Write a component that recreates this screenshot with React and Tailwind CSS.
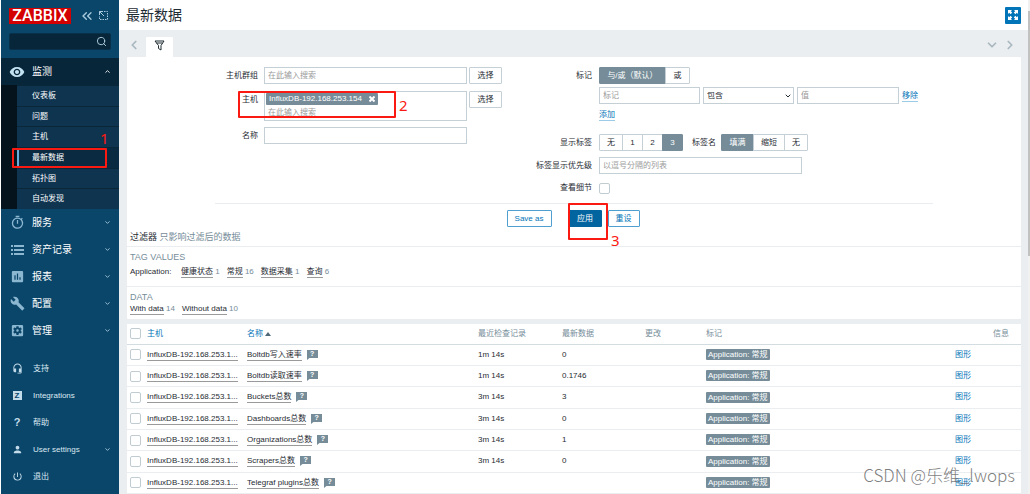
import { useState } from "react";
import {
  ChevronDown,
  ChevronLeft,
  ChevronRight,
  ChevronUp,
  ChevronsLeft,
  Search,
} from "lucide-react";
import {
  MdAssessment,
  MdBuild,
  MdHeadsetMic,
  MdOutlineTimer,
  MdPerson,
  MdPowerSettingsNew,
  MdSettingsApplications,
  MdVisibility,
} from "react-icons/md";

const subMenu = ["仪表板", "问题", "主机", "最新数据", "拓扑图", "自动发现"];

const ListIcon = () => (
  <svg width="13" height="10" viewBox="0 0 13 10" fill="currentColor">
    <path d="M0 0h2v2H0zM3 0h10v2H3zM0 4h2v2H0zM3 4h10v2H3zM0 8h2v2H0zM3 8h10v2H3z" />
  </svg>
);

const mainMenu = [
  { label: "服务", Icon: MdOutlineTimer },
  { label: "资产记录", Icon: ListIcon },
  { label: "报表", Icon: MdAssessment },
  { label: "配置", Icon: MdBuild },
  { label: "管理", Icon: MdSettingsApplications },
];

const ZIcon = () => (
  <span className="flex h-[9px] w-[9px] items-center justify-center bg-[#c3dcea] text-[8px] font-bold leading-none text-[#0a466a]">
    Z
  </span>
);

const HelpIcon = () => (
  <span className="text-[11px] font-bold leading-none">?</span>
);

const userMenu = [
  { label: "支持", Icon: MdHeadsetMic },
  { label: "Integrations", Icon: ZIcon },
  { label: "帮助", Icon: HelpIcon },
  { label: "User settings", Icon: MdPerson, more: true },
  { label: "退出", Icon: MdPowerSettingsNew },
];

const rows = [
  { name: "Boltdb写入速率", check: "1m 14s", value: "0" },
  { name: "Boltdb读取速率", check: "1m 14s", value: "0.1746" },
  { name: "Buckets总数", check: "3m 14s", value: "3" },
  { name: "Dashboards总数", check: "3m 14s", value: "0" },
  { name: "Organizations总数", check: "3m 14s", value: "1" },
  { name: "Scrapers总数", check: "3m 14s", value: "0" },
  { name: "Telegraf plugins总数", check: "", value: "" },
];

const tagValues = [
  { label: "健康状态", count: 1 },
  { label: "常规", count: 16 },
  { label: "数据采集", count: 1 },
  { label: "查询", count: 6 },
];

const inputClass =
  "h-[17px] border border-[#c5d0d6] bg-white px-[3px] text-[8px] leading-none text-[#1f2c33] outline-none placeholder:text-[#9a9a9a]";
const grayButton =
  "h-[17px] w-[33px] shrink-0 rounded-[1px] border border-[#c5d0d6] bg-white leading-none";
const blueLink =
  "inline-block border-b border-[#9ccbe8] leading-[11px] text-[#0275b8]";
const darkLink = "inline-block border-b border-[#9a9a9a] leading-[10px]";
const checkboxClass =
  "block h-[11px] w-[11px] appearance-none rounded-[2px] border border-[#c0ccd2] bg-white checked:bg-[#0275b8]";

function Segments({ name, options, value }) {
  const [selected, setSelected] = useState(value);

  return (
    <div className="flex">
      {options.map((item, i) => (
        <label
          key={i}
          className={`-mr-px flex h-[17px] items-center justify-center border border-[#c5d0d6] first:rounded-l-[1px] last:rounded-r-[1px] has-checked:border-[#768d99] has-checked:bg-[#768d99] has-checked:text-white ${item.width}`}
        >
          <input
            type="radio"
            name={name}
            className="sr-only"
            checked={selected === i}
            onChange={() => setSelected(i)}
          />
          {item.label}
        </label>
      ))}
    </div>
  );
}

function Sidebar() {
  return (
    <aside className="w-[118px] shrink-0 bg-[#0a466a] text-white">
      <div className="flex h-[31px] items-center pl-2">
        <a
          href="#"
          className="flex h-4 w-[62px] items-center justify-center bg-[#d40000] font-['Roboto',sans-serif] text-[16px] font-medium leading-none"
        >
          ZABBIX
        </a>
        <button className="ml-2 text-[#a9cbe0]" aria-label="折叠">
          <ChevronsLeft size={16} strokeWidth={2} />
        </button>
        <button className="ml-1 text-[#a9cbe0]" aria-label="隐藏">
          <svg width="9" height="9" viewBox="0 0 9 9" fill="none" stroke="currentColor">
            <path d="M5 .5h3.500v8H.5V5" strokeDasharray="1.500 1" />
            <path d="M.5 4V.5H4M.5 .5L5 5" />
          </svg>
        </button>
      </div>

      <div className="mx-2 mt-[2px] flex h-[17px] items-center rounded-[2px] border border-[#08304a] bg-[#072639] pr-[3px]">
        <input
          className="h-full w-full min-w-0 bg-transparent px-1 text-[8px] outline-none"
          aria-label="搜索"
        />
        <Search size={11} className="shrink-0 text-[#b5d3e4]" />
      </div>

      <nav className="mt-2 text-[10px]">
        <a href="#" className="flex h-[27px] items-center bg-[#08263a] px-2">
          <MdVisibility size={16} className="text-[#c3e2f2]" />
          <span className="ml-[7px] flex-1">监测</span>
          <ChevronUp size={7} strokeWidth={3} />
        </a>
        <div className="relative bg-[#05131d] pl-4 text-[8px]">
          <ul className="flex h-[124px] flex-col bg-[#0e3450]">
            {subMenu.map((item, i) => (
              <li
                key={i}
                className={`flex flex-1 border-t border-[#0a2639] ${
                  item === "最新数据" ? "bg-[#0a2a41]" : ""
                }`}
              >
                <a
                  href="#"
                  className={`flex flex-1 items-center border-l-2 pl-[13px] ${
                    item === "最新数据"
                      ? "border-[#69aedb]"
                      : "border-transparent"
                  }`}
                >
                  {item}
                </a>
              </li>
            ))}
          </ul>
          <div className="pointer-events-none absolute left-[11px] top-[63px] h-[20px] w-[95px] rounded-[1px] border-2 border-[#fb1a12]" />
          <span className="absolute left-[99px] top-[45px] font-['Noto_Sans',sans-serif] text-[15px] leading-4 text-[#fb1a12]">
            1
          </span>
        </div>
        {mainMenu.map(({ label, Icon }, i) => (
          <a key={i} href="#" className="flex h-[27px] items-center px-2">
            <span className="flex w-4 justify-center text-[#8cb7d1]">
              <Icon size={15} />
            </span>
            <span className="ml-[7px] flex-1">{label}</span>
            <ChevronDown size={7} strokeWidth={3} className="text-[#a9cbe0]" />
          </a>
        ))}
      </nav>

      <nav className="mt-[11px] text-[8px] text-[#dbe9f2]">
        {userMenu.map(({ label, Icon, more }, i) => (
          <a key={i} href="#" className="flex h-[27px] items-center px-2">
            <span className="flex w-4 justify-center text-[#c3dcea]">
              <Icon size={11} />
            </span>
            <span className="ml-2 flex-1">{label}</span>
            {more && (
              <ChevronDown size={7} strokeWidth={3} className="text-[#a9cbe0]" />
            )}
          </a>
        ))}
      </nav>
    </aside>
  );
}

function FilterLeft() {
  return (
    <div className="flex w-[287px] shrink-0 flex-col gap-[6px]">
      <div className="flex gap-[6px]">
        <label htmlFor="groups" className="w-[43px] text-right leading-[17px]">
          主机群组
        </label>
        <input
          id="groups"
          className={`${inputClass} w-[203px]`}
          placeholder="在此输入搜索"
        />
        <button className={`${grayButton} -ml-1`}>选择</button>
      </div>

      <div className="relative mt-px flex gap-[6px]">
        <label htmlFor="hosts" className="w-[43px] text-right leading-[17px]">
          主机
        </label>
        <div className="h-[30px] w-[203px] border border-[#c5d0d6] p-px">
          <span className="flex h-[12px] w-[112px] items-center justify-between rounded-[1px] bg-[#768d99] pl-[3px] pr-[3px] text-white">
            InfluxDB-192.168.253.154
            <button aria-label="移除主机">
              <svg width="6" height="6" viewBox="0 0 6 6" stroke="currentColor" strokeWidth="2">
                <path d="M.5 .5l5 5M5.500 .5l-5 5" />
              </svg>
            </button>
          </span>
          <input
            id="hosts"
            className="block h-[14px] w-full px-[2px] text-[8px] outline-none placeholder:text-[#9a9a9a]"
            placeholder="在此输入搜索"
          />
        </div>
        <button className={`${grayButton} -ml-1`}>选择</button>
        <div className="pointer-events-none absolute left-[23px] top-0 h-[27px] w-[158px] rounded-[1px] border-2 border-[#fb1a12]" />
        <span className="absolute left-[184px] top-[6px] font-['Noto_Sans',sans-serif] text-[15px] leading-4 text-[#fb1a12]">
          2
        </span>
      </div>

      <div className="flex gap-[6px]">
        <label htmlFor="name" className="w-[43px] text-right leading-[17px]">
          名称
        </label>
        <input id="name" className={`${inputClass} w-[203px]`} />
      </div>
    </div>
  );
}

function FilterRight() {
  return (
    <div className="flex-1">
      <div className="flex gap-[7px]">
        <span className="w-[90px] text-right leading-[17px]">标记</span>
        <div>
          <Segments
            name="evaltype"
            value={0}
            options={[
              { label: "与/或（默认）", width: "w-[67px]" },
              { label: "或", width: "w-[25px]" },
            ]}
          />
          <div className="mt-[3px] flex items-center gap-[3px]">
            <input
              className={`${inputClass} w-[101px]`}
              placeholder="标记"
              aria-label="标记"
            />
            <div className="relative">
              <select
                className={`${inputClass} w-[91px] appearance-none`}
                aria-label="运算符"
              >
                <option>包含</option>
                <option>等于</option>
              </select>
              <ChevronDown
                size={8}
                strokeWidth={3}
                className="pointer-events-none absolute right-[2px] top-[5px]"
              />
            </div>
            <input
              className={`${inputClass} w-[102px]`}
              placeholder="值"
              aria-label="值"
            />
            <button className={blueLink}>移除</button>
          </div>
          <div className="mt-[5px] flex h-3">
            <button className={blueLink}>添加</button>
          </div>
        </div>
      </div>

      <div className="mt-[13px] flex gap-[7px]">
        <span className="w-[90px] text-right leading-[17px]">显示标签</span>
        <Segments
          name="show_tags"
          value={3}
          options={[
            { label: "无", width: "w-[24px]" },
            { label: "1", width: "w-[21px]" },
            { label: "2", width: "w-[21px]" },
            { label: "3", width: "w-[21px]" },
          ]}
        />
        <div className="ml-[3px] flex gap-[5px]">
          <span className="leading-[17px]">标签名</span>
          <Segments
            name="tag_name_format"
            value={0}
            options={[
              { label: "填满", width: "w-[33px]" },
              { label: "缩短", width: "w-[32px]" },
              { label: "无", width: "w-[24px]" },
            ]}
          />
        </div>
      </div>

      <div className="mt-[6px] flex gap-[7px]">
        <label htmlFor="priority" className="w-[90px] text-right leading-[17px]">
          标签显示优先级
        </label>
        <input
          id="priority"
          className={`${inputClass} w-[203px]`}
          placeholder="以逗号分隔的列表"
        />
      </div>

      <div className="mt-2 flex h-3 items-center gap-[7px]">
        <label htmlFor="details" className="w-[90px] text-right">
          查看细节
        </label>
        <input id="details" type="checkbox" className={checkboxClass} />
      </div>
    </div>
  );
}

function Filter() {
  return (
    <section className="rounded-[1px] bg-white pt-[10px]">
      <form
        className="mx-auto max-w-[718px]"
        onSubmit={(e) => e.preventDefault()}
      >
        <div className="flex">
          <FilterLeft />
          <FilterRight />
        </div>
        <div className="relative mt-[9px] flex justify-center border-t border-[#ebeef0] pr-[2px] pt-[6px]">
          <button className="h-[17px] w-[45px] rounded-[1px] border border-[#4f9fd0] leading-none text-[#0275b8]">
            Save as
          </button>
          <button className="ml-[17px] h-[17px] w-[33px] rounded-[1px] bg-[#02659f] leading-none text-white">
            应用
          </button>
          <button className="ml-[6px] h-[17px] w-[32px] rounded-[1px] border border-[#4f9fd0] leading-none text-[#0275b8]">
            重设
          </button>
          <div className="pointer-events-none absolute left-[353px] -top-px h-[37px] w-[40px] rounded-[1px] border-2 border-[#fb1a12]" />
          <span className="absolute left-[396px] top-[28px] font-['Noto_Sans',sans-serif] text-[15px] leading-4 text-[#fb1a12]">
            3
          </span>
        </div>
      </form>

      <h4 className="mt-[2px] border-b border-[#ebeef0] px-[3px] pb-px text-[9px] leading-4">
        过滤器 <span className="text-[#768d99]">只影响过滤后的数据</span>
      </h4>

      <div className="h-10 border-b border-[#ebeef0] px-[3px] pt-1">
        <h3 className="text-[9px] leading-3 text-[#768d99]">TAG VALUES</h3>
        <div className="mt-1 flex text-[#768d99]">
          <span className="w-[51px] leading-[10px] text-[#1f2c33]">
            Application:
          </span>
          <div className="flex gap-[7px]">
            {tagValues.map((item, i) => (
              <span key={i} className="leading-[10px]">
                <a href="#" className={`${darkLink} text-[#1f2c33]`}>
                  {item.label}
                </a>{" "}
                {item.count}
              </span>
            ))}
          </div>
        </div>
      </div>

      <div className="px-[3px] pb-1 pt-1">
        <h3 className="text-[9px] leading-3 text-[#768d99]">DATA</h3>
        <div className="mt-px flex gap-[7px] leading-[10px] text-[#768d99]">
          <span>
            <a href="#" className={`${darkLink} text-[#1f2c33]`}>
              With data
            </a>{" "}
            14
          </span>
          <span>
            <a href="#" className={`${darkLink} text-[#1f2c33]`}>
              Without data
            </a>{" "}
            10
          </span>
        </div>
      </div>
    </section>
  );
}

function Hint() {
  return (
    <button
      className="relative ml-[5px] inline-flex h-[10px] w-[11px] justify-center align-middle text-[7px] font-bold leading-2 text-white"
      aria-label="描述"
    >
      <svg className="absolute inset-0" width="11" height="10" viewBox="0 0 11 10">
        <path d="M0 0h11v8H2.500L0 10z" fill="#768d99" />
      </svg>
      <span className="relative">?</span>
    </button>
  );
}

function DataTable() {
  return (
    <table className="mt-[5px] h-[170px] w-full table-fixed bg-white text-left">
      <colgroup>
        <col className="w-[20px]" />
        <col className="w-[100px]" />
        <col className="w-[231px]" />
        <col className="w-[84px]" />
        <col className="w-[83px]" />
        <col className="w-[61px]" />
        <col />
        <col className="w-[38px]" />
        <col className="w-[28px]" />
      </colgroup>
      <thead>
        <tr className="h-[20px] border-b border-[#d3dce0] text-[#768d99] [&>th]:font-normal">
          <th className="pl-[3px]">
            <input type="checkbox" className={checkboxClass} aria-label="全选" />
          </th>
          <th>
            <a href="#" className="text-[#0275b8]">
              主机
            </a>
          </th>
          <th>
            <a href="#" className="text-[#0275b8]">
              名称
              <svg className="ml-[2px] inline" width="6" height="4" viewBox="0 0 6 4">
                <path d="M0 4L3 0l3 4z" fill="#4f6875" />
              </svg>
            </a>
          </th>
          <th>最近检查记录</th>
          <th>最新数据</th>
          <th>更改</th>
          <th>标记</th>
          <th></th>
          <th>信息</th>
        </tr>
      </thead>
      <tbody>
        {rows.map((item, i) => (
          <tr key={i} className="h-[21px] border-b border-[#ebeef0]">
            <td className="pl-[3px]">
              <input
                type="checkbox"
                className={checkboxClass}
                aria-label={item.name}
              />
            </td>
            <td>
              <a href="#" className={`${darkLink} pt-px align-middle`}>
                InfluxDB-192.168.253.1...
              </a>
            </td>
            <td>
              <a href="#" className={`${darkLink} pt-px align-middle`}>
                {item.name}
              </a>
              <Hint />
            </td>
            <td>{item.check}</td>
            <td>{item.value}</td>
            <td></td>
            <td>
              <span className="inline-block h-[11px] rounded-[1px] bg-[#768d99] px-[2px] align-middle leading-[11px] text-white">
                Application: 常规
              </span>
            </td>
            <td>
              <a href="#" className="text-[#0275b8]">
                图形
              </a>
            </td>
            <td></td>
          </tr>
        ))}
      </tbody>
    </table>
  );
}

function App() {
  return (
    <div className="relative flex min-h-screen overflow-hidden bg-white pl-px font-['Liberation_Sans','Noto_Sans_CJK_SC',sans-serif] text-[8px] leading-3 text-[#1f2c33]">
      <Sidebar />
      <main className="min-w-0 flex-1 bg-[#ebeef0]">
        <header className="flex h-[30px] items-center justify-between bg-white pl-[7px] pr-[7px]">
          <h1 className="text-[14px] leading-5">最新数据</h1>
          <button
            className="flex h-[17px] w-4 items-center justify-center rounded-[1px] bg-[#0275b8] text-white"
            aria-label="全屏"
          >
            <svg width="10" height="10" viewBox="0 0 10 10" fill="currentColor">
              <path d="M0 0h4L2.800 1.200 4.200 2.600 2.600 4.200 1.200 2.800 0 4z" />
              <path d="M10 0v4L8.800 2.800 7.400 4.200 5.800 2.600 7.200 1.200 6 0z" />
              <path d="M0 10V6l1.200 1.200L2.600 5.800 4.200 7.400 2.800 8.800 4 10z" />
              <path d="M10 10H6l1.200-1.200L5.800 7.400 7.400 5.800 8.800 7.200 10 6z" />
            </svg>
          </button>
        </header>

        <div className="pl-2 pr-[7px]">
          <div className="flex h-[27px] items-end text-[#a9b8c0]">
            <button className="mb-[5px]" aria-label="上一个">
              <ChevronLeft size={14} strokeWidth={3} />
            </button>
            <button
              className="ml-[5px] flex h-[20px] w-[27px] items-start justify-center rounded-t-[1px] bg-white pt-[3px] text-[#1f2c33]"
              aria-label="过滤器"
            >
              <svg width="11" height="11" viewBox="0 0 11 11" fill="none" stroke="currentColor">
                <path d="M1 1h9L7 5.500V10L4.500 8.500v-3z" />
                <path d="M2.500 3h6" />
              </svg>
            </button>
            <div className="mb-[5px] ml-auto flex gap-1 pr-1">
              <button aria-label="展开">
                <ChevronDown size={14} strokeWidth={3} />
              </button>
              <button aria-label="下一个">
                <ChevronRight size={14} strokeWidth={3} />
              </button>
            </div>
          </div>
          <Filter />
          <DataTable />
        </div>
      </main>
      <div className="w-[2px] shrink-0 bg-[#f1f1f1] pt-[11px]">
        <div className="h-[245px] bg-[#c1c1c1]" />
      </div>
      <span className="pointer-events-none absolute bottom-[7px] right-[15px] font-['Noto_Sans_CJK_SC',sans-serif] text-[17px] font-light leading-6 text-[#5c5c5c]/80">
        CSDN @乐维_lwops
      </span>
    </div>
  );
}

export default App;
